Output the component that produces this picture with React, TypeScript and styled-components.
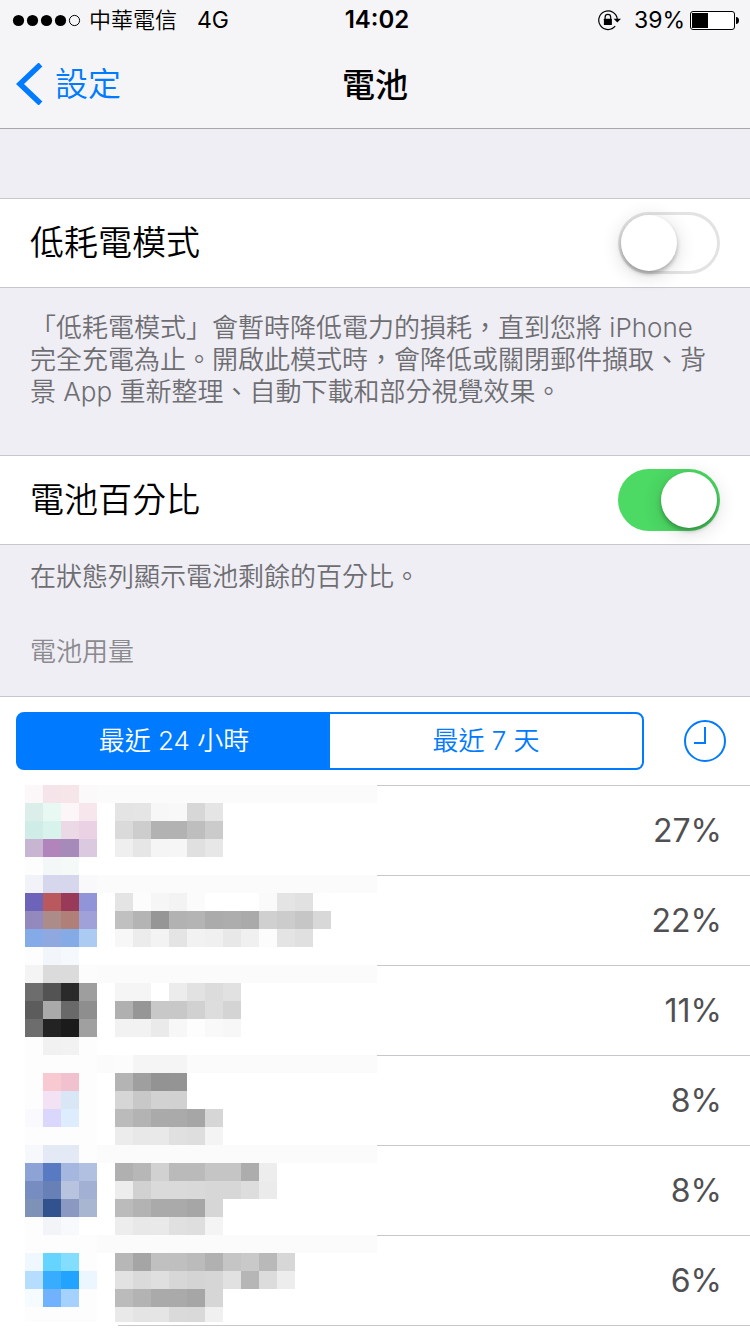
import { useState } from 'react';
import styled, { createGlobalStyle } from 'styled-components';

type App = {
  id: string;
  percent: number;
  icon: string[];
  name: string[];
};

const CELL = 18;
const NAME_X = 90;
const MOSAIC_WIDTH = 352;

// two digits = grey level, six digits = full hex
const apps: App[] = [
  {
    id: 'app-1',
    percent: 27,
    icon: [
      'fcf8f9 f5e5eb f6e6ea fcf9fa',
      'dbeee9 e8f9f3 fdf6f8 f7e6ec',
      'd0ece6 d7f3eb ebd9e5 ead2e4',
      'c7b5d1 b184bb a68aba dbc9df',
      'fd f3f7f8 f5faf8 ff',
    ],
    name: ['', 'e4 e5 f7 f8 d7 e5', 'da cd b2 b2 be cb', 'ef e6 f5 f6 e0 e7', ''],
  },
  {
    id: 'app-2',
    percent: 22,
    icon: [
      'f1f3f8 d6d7ec d6d7ec f9f9fc',
      '6d64ba b9595e 993b58 9194d8',
      '9489bd ab8c89 b08078 a0a1d9',
      '84abe8 8fa8df 84abe6 abcbf3',
      'fd f2f6fb f5f9fd ff',
    ],
    name: [
      '',
      'e4 fc f6 f3 fb ff ff ff fa e4 e1 fe',
      'c0 b4 96 b2 b4 ab ad aa d0 cc c6 d8',
      'f7 ec f3 e4 f2 f0 e8 f0 fc e4 e0 ff',
      '',
    ],
  },
  {
    id: 'app-3',
    percent: 11,
    icon: ['f4 db db fc', '6d 53 2a 9e', '5c aa 69 8e', '6d 23 1b a0', 'fd f1 f2 fd'],
    name: ['', 'f5 f5 ff ec e2 dc e1', 'b0 96 c8 c8 d1 dd d4', 'f2 f2 ea f7 fd f9 f7', ''],
  },
  {
    id: 'app-4',
    percent: 8,
    icon: ['fd fd fd fd', 'fd f9c9d2 f2c1d0 fd', 'fd f2e2f3 d9e6f6 fd', 'f9f9fe dbd6fc ddedfd fd', 'fd fd fd fd'],
    name: ['fc f5 f5 f5', 'b4 9f 93 94', 'd6 c8 d2 d1', 'bb b3 aa aa a6 d6', 'ec e8 e9 e0 de f4'],
  },
  {
    id: 'app-5',
    percent: 8,
    icon: [
      'f7f8fc e4eaf5 e4eaf5 fd',
      '8da2d5 577ac3 a6b7df b1c0e1',
      '778dc1 6780b6 b8c3df a2b0d3',
      '7e91b7 32518f 8a98c2 a9b6d2',
      'fd f2f4f8 f7f9fc ff',
    ],
    name: [
      '',
      'b0 b7 d1 ba ba c5 c5 ad ed',
      'ed d1 da da d9 d7 d7 dd eb',
      'bb b3 aa aa a6 d6',
      'ed e8 e9 e0 de f4',
    ],
  },
  {
    id: 'app-6',
    percent: 6,
    icon: [
      'fd fd fd fd',
      'eff8ff 65d4ff 83ddff fd',
      'b4ddff 38acff 21a3ff ebf6ff',
      'f5fbff 71b2ff a5d1ff fd',
      'fd fd fd fd',
    ],
    name: [
      '',
      'b7 a5 c0 bf bb b1 c5 c9 b9 d7',
      'e2 da df d7 d4 d6 e1 b6 dc ed',
      'bb b3 aa aa a6 d6',
      'e9 e4 e5 da d9 f0',
    ],
  },
];

const GlobalStyle = createGlobalStyle`
  * {
    box-sizing: border-box;
  }

  body {
    margin: 0;
    background-color: #fff;
    color: #000;
    font-family: Inter, 'Noto Sans CJK TC', sans-serif;
    font-weight: 350;
  }

  button {
    padding: 0;
    border: 0;
    background: none;
    font: inherit;
    cursor: pointer;
  }
`;

const Page = styled.div`
  background-color: #efeef4;
`;

const Header = styled.header`
  background-color: #f5f5f7;
  border-bottom: 1px solid #a7a7aa;
`;

const StatusBar = styled.div`
  display: grid;
  grid-template-columns: 1fr auto 1fr;
  align-items: center;
  height: 40px;
  padding: 0 11px 0 12px;
  font-size: 23px;
  font-weight: 400;
  line-height: 40px;
`;

const StatusGroup = styled.div<{ $end?: boolean }>`
  display: flex;
  align-items: center;
  justify-content: ${({ $end }) => ($end ? 'flex-end' : 'flex-start')};
`;

const Carrier = styled.span`
  margin: 0 20px 0 8px;
  font-size: 22px;
  font-weight: 350;
`;

const Clock = styled.time`
  padding-left: 3px;
  font-size: 24px;
  font-weight: 600;
`;

const Level = styled.span`
  margin: 0 5px 0 12px;
`;

const NavBar = styled.nav`
  display: grid;
  grid-template-columns: 1fr auto 1fr;
  align-items: center;
  height: 88px;
  padding: 0 16px;
`;

const BackLink = styled.a`
  display: flex;
  align-items: center;
  gap: 12px;
  color: #007aff;
  font-size: 33px;
  line-height: 50px;
  text-decoration: none;
`;

const Title = styled.h1`
  margin: 0;
  padding-top: 2px;
  font-size: 33px;
  font-weight: 500;
  line-height: 50px;
`;

const Main = styled.main`
  padding-top: 69px;
`;

const SettingRow = styled.label`
  display: flex;
  align-items: center;
  justify-content: space-between;
  height: 90px;
  padding: 0 30px;
  background-color: #fff;
  border-top: 1px solid #c8c7cc;
  border-bottom: 1px solid #c8c7cc;
  font-size: 34px;
  line-height: 48px;
`;

const Switch = styled.input`
  appearance: none;
  display: flex;
  width: 102px;
  height: 62px;
  margin: 0;
  padding: 3px;
  border-radius: 31px;
  box-shadow: inset 0 0 0 3px #e3e3e3;

  &::before {
    content: '';
    width: 56px;
    height: 56px;
    border-radius: 50%;
    background-color: #fff;
    box-shadow: 0 3px 4px rgba(0, 0, 0, 0.26), 0 4px 20px rgba(0, 0, 0, 0.16);
  }

  &:checked {
    justify-content: flex-end;
    background-color: #4cd964;
    box-shadow: none;
  }
`;

const Note = styled.p<{ $long?: boolean }>`
  margin: 0;
  padding: ${({ $long }) => ($long ? '24px 30px 47px' : '16px 30px 0')};
  color: #6d6d72;
  font-size: 26px;
  line-height: 32px;
`;

const SectionTitle = styled.h2`
  margin: 0;
  padding: 43px 30px 28px;
  color: #8a8a8f;
  font-size: 26px;
  font-weight: 350;
  line-height: 32px;
`;

const Usage = styled.section`
  background-color: #fff;
  border-top: 1px solid #c8c7cc;
`;

const Toolbar = styled.div`
  display: flex;
  align-items: center;
  gap: 40px;
  padding: 15px 24px 15px 16px;
`;

const Segments = styled.div`
  display: flex;
  flex: 1;
  height: 58px;
  overflow: hidden;
  background-color: #007aff;
  border: 2px solid #007aff;
  border-radius: 8px;
`;

const Segment = styled.button<{ $active: boolean }>`
  && {
    flex: 1;
    background-color: ${({ $active }) => ($active ? '#007aff' : '#fff')};
    color: ${({ $active }) => ($active ? '#fff' : '#007aff')};
    font-size: 26px;
    line-height: 32px;
  }
`;

const ClockButton = styled.button`
  display: flex;
`;

const AppList = styled.ul`
  margin: 0;
  padding: 0 0 8px;
  list-style: none;

  &::after {
    content: '';
    display: block;
    height: 1px;
    margin-left: 118px;
    background-color: #c8c7cc;
  }
`;

const AppRow = styled.li`
  display: flex;
  height: 90px;
  padding-left: 25px;
`;

const Percent = styled.span`
  display: flex;
  flex: 1;
  align-items: center;
  justify-content: flex-end;
  padding-right: 28px;
  border-top: 1px solid #c8c7cc;
  color: #505053;
  font-size: 32px;
  font-weight: 400;
  line-height: 48px;
`;

const toColor = (code: string) => (code.length === 2 ? `#${code}${code}${code}` : `#${code}`);

const Cells = ({ rows, x }: { rows: string[]; x: number }) => (
  <>
    {rows.map((row, r) =>
      row
        .split(' ')
        .filter(Boolean)
        .map((code, c) => (
          <rect key={`${r}-${c}`} x={x + c * CELL} y={r * CELL} width={CELL} height={CELL} fill={toColor(code)} />
        )),
    )}
  </>
);

const Mosaic = ({ app, height }: { app: App; height: number }) => (
  <svg width={MOSAIC_WIDTH} height={height} shapeRendering='crispEdges' aria-hidden='true'>
    <rect x='72' width={MOSAIC_WIDTH - 72} height={CELL} fill='#fbfbfb' />
    <Cells rows={app.icon} x={0} />
    <Cells rows={app.name} x={NAME_X} />
  </svg>
);

const Signal = () => (
  <svg width='69' height='14' aria-hidden='true'>
    {[6, 20, 34, 48].map((cx) => (
      <circle key={cx} cx={cx + 0.5} cy='7.5' r='5.6' />
    ))}
    <circle cx='62.5' cy='7.5' r='5.1' fill='none' stroke='#000' />
  </svg>
);

const RotationLock = () => (
  <svg width='24' height='22' viewBox='0 0 24 22' fill='none' stroke='#000' aria-hidden='true'>
    <path d='M19.3 10.2A9.3 9.3 0 1 0 17.2 17.2' strokeWidth='1.2' />
    <path d='M15.6 9.8H23l-3.7 3.8z' fill='#000' stroke='none' />
    <path d='M7.1 10V8.2a2.8 2.8 0 0 1 5.6 0V10' strokeWidth='1.2' />
    <rect x='5.9' y='9.8' width='8' height='6.2' rx='0.5' fill='#000' stroke='none' />
  </svg>
);

const Battery = () => (
  <svg width='49' height='20' viewBox='0 0 49 20' aria-hidden='true'>
    <rect x='0.5' y='1.5' width='44' height='18' rx='2.5' fill='#fff' stroke='#000' />
    <rect x='2' y='3' width='16' height='15' />
    <path d='M46 7c2 0 3 1.4 3 3.5S48 14 46 14z' />
  </svg>
);

export default function App() {
  const [period, setPeriod] = useState<'day' | 'week'>('day');

  return (
    <>
      <GlobalStyle />
      <Page lang='zh-Hant'>
        <Header>
          <StatusBar>
            <StatusGroup>
              <Signal />
              <Carrier>中華電信</Carrier>
              <span>4G</span>
            </StatusGroup>
            <Clock>14:02</Clock>
            <StatusGroup $end>
              <RotationLock />
              <Level>39%</Level>
              <Battery />
            </StatusGroup>
          </StatusBar>
          <NavBar>
            <BackLink href='#settings'>
              <svg width='27' height='42' viewBox='0 0 27 42' fill='none' stroke='#007aff' aria-hidden='true'>
                <path d='M24.5 1.5L4 21l20.5 19.5' strokeWidth='5.5' />
              </svg>
              設定
            </BackLink>
            <Title>電池</Title>
          </NavBar>
        </Header>
        <Main>
          <SettingRow>
            低耗電模式
            <Switch type='checkbox' role='switch' />
          </SettingRow>
          <Note $long>
            「低耗電模式」會暫時降低電力的損耗，直到您將 iPhone 完全充電為止。開啟此模式時，會降低或關閉郵件擷取、背景 App
            重新整理、自動下載和部分視覺效果。
          </Note>
          <SettingRow>
            電池百分比
            <Switch type='checkbox' role='switch' defaultChecked />
          </SettingRow>
          <Note>在狀態列顯示電池剩餘的百分比。</Note>
          <SectionTitle>電池用量</SectionTitle>
          <Usage>
            <Toolbar>
              <Segments>
                <Segment
                  type='button'
                  aria-pressed={period === 'day'}
                  $active={period === 'day'}
                  onClick={() => setPeriod('day')}
                >
                  最近 24 小時
                </Segment>
                <Segment
                  type='button'
                  aria-pressed={period === 'week'}
                  $active={period === 'week'}
                  onClick={() => setPeriod('week')}
                >
                  最近 7 天
                </Segment>
              </Segments>
              <ClockButton type='button' aria-label='顯示使用時間'>
                <svg width='42' height='42' fill='none' stroke='#007aff' strokeWidth='2'>
                  <circle cx='21' cy='21' r='20' />
                  <path d='M21 7v16H10' />
                </svg>
              </ClockButton>
            </Toolbar>
            <AppList>
              {apps.map((app, i) => (
                <AppRow key={app.id}>
                  <Mosaic app={app} height={i === apps.length - 1 ? 87 : 90} />
                  <Percent>{app.percent}%</Percent>
                </AppRow>
              ))}
            </AppList>
          </Usage>
        </Main>
      </Page>
    </>
  );
}
